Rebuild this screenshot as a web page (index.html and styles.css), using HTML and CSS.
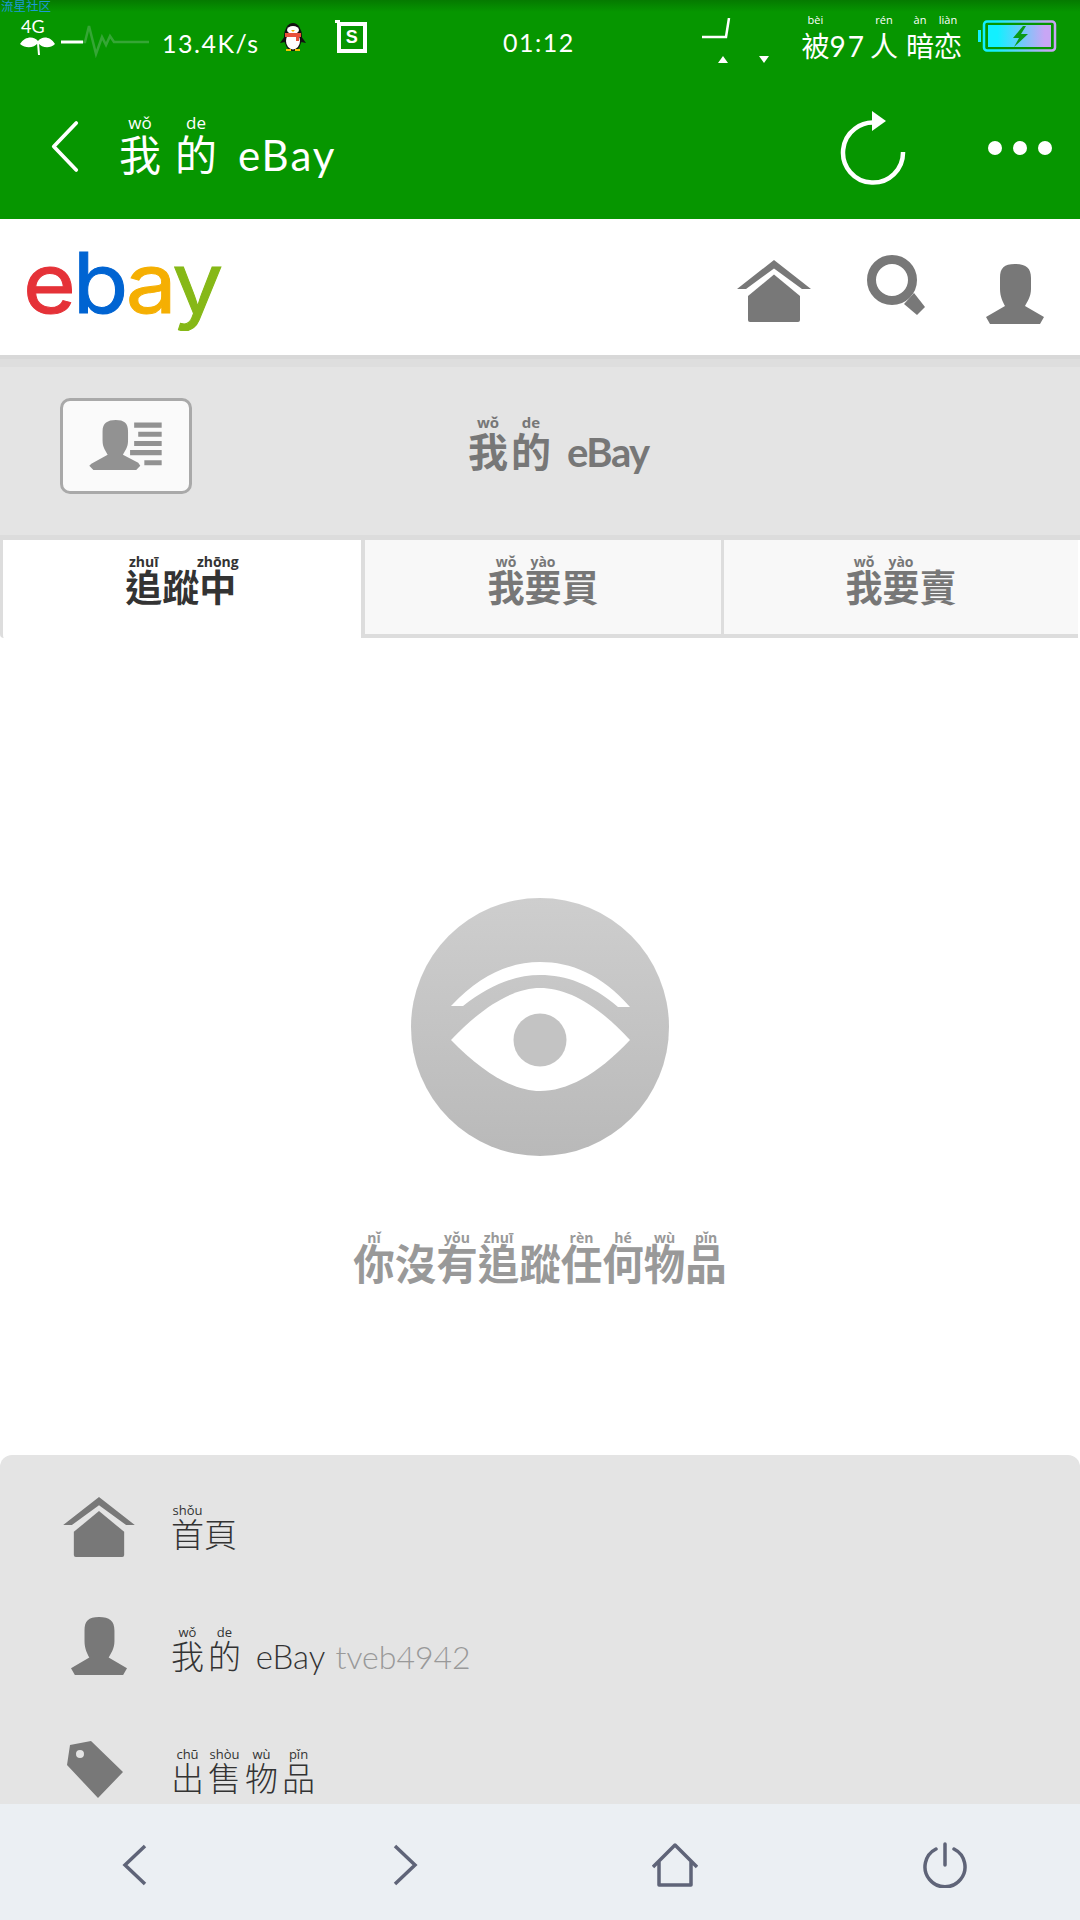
FILE: index.html
```html
<!DOCTYPE html>
<html lang="zh-Hant">
<head>
<meta charset="UTF-8" />
<meta name="viewport" content="width=device-width, initial-scale=1" />
<title>我的 eBay</title>
<link rel="stylesheet" href="styles.css">
</head>
<body>
  <!-- shared icon shapes -->
  <svg class="defs" width="0" height="0" aria-hidden="true">
    <symbol id="i-home" viewBox="0 0 74 62">
      <path d="M0 29 37 0 74 29H65L37 8.5 9 29Z"/>
      <path d="M11 36 37 14.5 63 36V60Q63 62 61 62H13Q11 62 11 60Z"/>
    </symbol>
    <symbol id="i-person" viewBox="0 0 58 60">
      <path d="M29 0C40 0 45 4 45 14V25C45 33 41 38 39 42L58 53 54 60H4L0 53 19 42C17 38 14 33 14 25V14C14 4 18 0 29 0Z"/>
    </symbol>
  </svg>

  <div class="watermark">流星社区</div>

  <div class="status-bar">
    <div class="status-left">
      <svg class="ic-net" width="36" height="46" viewBox="0 -8 36 46">
        <text x="1" y="15" class="net-text">4G</text>
        <path d="M18 23C14 18 5 18 0 26 6 31 14 30 18 25 22 30 30 31 35 26 30 18 22 18 18 23Z" fill="#fff"/>
        <path d="M18 25 19 37" stroke="#fff" stroke-width="2"/>
      </svg>
      <svg class="ic-pulse" width="88" height="34" viewBox="0 0 88 34">
        <path d="M22 18H0" stroke="#fff" stroke-width="3" fill="none"/>
        <path d="M22 18H24L28 2 35 30 41 13 45 21 49 12 53 18H88" stroke="#35a635" stroke-width="2.5" fill="none"/>
      </svg>
      <span class="speed">13.4K/s</span>
      <svg class="ic-qq" width="26" height="30" viewBox="0 0 26 30">
        <ellipse cx="13" cy="15" rx="9" ry="14" fill="#111"/>
        <path d="M5 14 0 21 5 20ZM21 14 26 21 21 20Z" fill="#111"/>
        <ellipse cx="13" cy="19" rx="7" ry="8.5" fill="#fff"/>
        <ellipse cx="13" cy="8" rx="6" ry="4" fill="#fff"/>
        <path d="M5 11H21V15H19V19H16V15H5Z" fill="#e8503a"/>
        <path d="M11 8H15L13 10Z" fill="#f3b300"/>
        <path d="M6 27H11V29H6ZM15 27H20V29H15Z" fill="#f3c300"/>
      </svg>
      <div class="s-box">S</div>
    </div>
    <div class="clock">01:12</div>
    <div class="status-right">
      <svg class="ic-signal" width="68" height="46" viewBox="0 0 68 46">
        <path d="M1 19H25L28 0" stroke="#fff" stroke-width="2.5" fill="none"/>
        <path d="M17 45 22 38 27 45ZM58 38H68L63 45Z" fill="#fff"/>
      </svg>
      <span class="liked">
        <ruby>被<rt>bèi</rt></ruby><span class="num">97</span><ruby class="wide">人<rt>rén</rt></ruby><ruby>暗<rt>àn</rt></ruby><ruby>恋<rt>liàn</rt></ruby>
      </span>
      <svg class="ic-batt" width="80" height="32" viewBox="0 0 80 32">
        <defs>
          <linearGradient id="batt" x1="0" y1="0" x2="1" y2="0">
            <stop offset="0.15" stop-color="#12f0ff"/>
            <stop offset="0.9" stop-color="#c8a6f5"/>
          </linearGradient>
        </defs>
        <path d="M3 10H0V22H3Z" fill="#12f0ff"/>
        <rect x="6" y="1.5" width="71" height="29" rx="3" fill="none" stroke="url(#batt)" stroke-width="2.5"/>
        <rect x="10" y="5" width="63" height="22" fill="url(#batt)"/>
        <path d="M45 6 35 18H41L36 27 50 14H43L48 6Z" fill="#0b9a18"/>
      </svg>
    </div>
  </div>

  <header class="app-bar">
    <svg class="ic-back" width="30" height="53" viewBox="0 0 32 56">
      <path d="M28 3 4 28 28 53" fill="none" stroke="#fff" stroke-width="4" stroke-linecap="round" stroke-linejoin="round"/>
    </svg>
    <h1 class="app-title"><ruby>我<rt>wǒ</rt></ruby><ruby>的<rt>de</rt></ruby><span class="latin">eBay</span></h1>
    <svg class="ic-refresh" width="68" height="74" viewBox="0 0 68 74">
      <path d="M40 12A30 30 0 1 0 65 41" fill="none" stroke="#fff" stroke-width="4.5"/>
      <path d="M32 0 46 10 32 20Z" fill="#fff" transform="translate(2 0)"/>
    </svg>
    <div class="dots"><span></span><span></span><span></span></div>
  </header>

  <nav class="site-nav">
    <div class="logo"><span class="l-e">e</span><span class="l-b">b</span><span class="l-a">a</span><span class="l-y">y</span></div>
    <div class="site-icons">
      <svg class="gray ic-nav-home"><use href="#i-home"/></svg>
      <svg class="gray ic-nav-search" viewBox="0 0 58 60">
        <circle cx="25" cy="25" r="20.5" fill="none" stroke="#787878" stroke-width="9"/>
        <path d="M37 49 47 38 58 52 50 60Z"/>
      </svg>
      <svg class="gray ic-nav-person"><use href="#i-person"/></svg>
    </div>
  </nav>

  <section class="page-head">
    <button class="card-btn" type="button" aria-label="Profile">
      <svg width="74" height="53" viewBox="0 0 72 52">
        <path d="M26 0C34 0 38 3 38 11V20C38 27 35 30 33 34L48 42 50 45 46 49H4L0 45 2 43 18 34C16 30 13 27 13 20V11C13 3 18 0 26 0Z" fill="#929292"/>
        <path d="M44 5H71M48 14H71M44 23H71M40 32H71M54 42H71" stroke="#929292" stroke-width="5"/>
      </svg>
    </button>
    <h2 class="page-title"><ruby>我<rt>wǒ</rt></ruby><ruby>的<rt>de</rt></ruby><span class="latin">eBay</span></h2>
  </section>

  <div class="tabs">
    <div class="tab active"><ruby>追<rt>zhuī</rt></ruby>蹤<ruby>中<rt>zhōng</rt></ruby></div>
    <div class="tab"><ruby>我<rt>wǒ</rt></ruby><ruby>要<rt>yào</rt></ruby>買</div>
    <div class="tab"><ruby>我<rt>wǒ</rt></ruby><ruby>要<rt>yào</rt></ruby>賣</div>
  </div>

  <main class="empty">
    <svg class="ic-eye" width="258" height="258" viewBox="0 0 258 258">
      <defs>
        <linearGradient id="eye-bg" x1="0" y1="0" x2="0" y2="1">
          <stop offset="0" stop-color="#cecece"/>
          <stop offset="1" stop-color="#b9b9b9"/>
        </linearGradient>
      </defs>
      <circle cx="129" cy="129" r="129" fill="url(#eye-bg)"/>
      <path d="M40 142C75 105 105 90 129 90 155 90 185 105 219 142 185 178 155 193 129 193 105 193 75 178 40 142Z" fill="#fff"/>
      <circle cx="129" cy="142" r="26.5" fill="#c3c3c3"/>
      <path d="M40 108C70 76 100 64 129 64 160 64 190 76 219 109H207C180 86 155 77 129 77 105 77 80 86 52 108Z" fill="#fff"/>
    </svg>
    <p class="empty-text"><ruby>你<rt>nǐ</rt></ruby>沒<ruby>有<rt>yǒu</rt></ruby><ruby>追<rt>zhuī</rt></ruby>蹤<ruby>任<rt>rèn</rt></ruby><ruby>何<rt>hé</rt></ruby><ruby>物<rt>wù</rt></ruby><ruby>品<rt>pǐn</rt></ruby></p>
  </main>

  <div class="menu">
    <div class="menu-row">
      <span class="menu-icon"><svg class="gray m-home"><use href="#i-home"/></svg></span>
      <span class="menu-text"><ruby>首<rt>shǒu</rt></ruby>頁</span>
    </div>
    <div class="menu-row">
      <span class="menu-icon"><svg class="gray m-person"><use href="#i-person"/></svg></span>
      <span class="menu-text"><ruby>我<rt>wǒ</rt></ruby><ruby>的<rt>de</rt></ruby><span class="latin">eBay</span> <span class="user-id">tveb4942</span></span>
    </div>
    <div class="menu-row">
      <span class="menu-icon">
        <svg class="gray m-tag" viewBox="0 0 56 57">
          <path fill-rule="evenodd" d="M3 4 24 0 56 31 31 57 0 24ZM13 9A4 4 0 1 0 13 17 4 4 0 1 0 13 9Z"/>
        </svg>
      </span>
      <span class="menu-text"><ruby>出<rt>chū</rt></ruby><ruby>售<rt>shòu</rt></ruby><ruby>物<rt>wù</rt></ruby><ruby>品<rt>pǐn</rt></ruby></span>
    </div>
  </div>

  <footer class="browser-bar">
    <svg width="26" height="42" viewBox="0 0 26 42"><path d="M23 2 3 21 23 40"/></svg>
    <svg width="26" height="42" viewBox="0 0 26 42"><path d="M3 2 23 21 3 40"/></svg>
    <svg width="46" height="44" viewBox="0 0 46 44"><path d="M1 24 23 2 45 24M7 18V42H39V18" stroke-linejoin="round"/></svg>
    <svg width="46" height="46" viewBox="0 0 46 46"><path d="M14 7A20 20 0 1 0 32 7M23 2V23" stroke-linecap="round"/></svg>
  </footer>
</body>
</html>
```

FILE: styles.css
```css
/* Reset */
* {
  box-sizing: border-box;
}

html, body {
  margin: 0;
  padding: 0;
}

body {
  position: relative;
  width: 1080px;
  height: 1920px;
  overflow: hidden;
  display: flex;
  flex-direction: column;
  background: #fff;
  font-family: "Lato", "Noto Sans CJK TC", sans-serif;
  color: #333;
}

.defs {
  position: absolute;
}

h1, h2, p {
  margin: 0;
  font-weight: normal;
}

/* pinyin sits right on top of the glyphs, so it gets nudged per section */
rt {
  position: relative;
  font-family: "Open Sans", sans-serif;
}

.gray {
  fill: #787878;
  display: block;
}

.latin {
  margin-left: 0.5em;
}

.watermark {
  position: absolute;
  top: 0;
  left: 1px;
  font-size: 12.5px;
  line-height: 14px;
  color: #1c9ad6;
}

/* Status bar */
.status-bar {
  height: 72px;
  padding: 18px 22px 0 20px;
  display: grid;
  grid-template-columns: 1fr auto 1fr;
  background: linear-gradient(#057a00, #069600 12px);
  color: #fff;
}

.status-left,
.status-right {
  display: flex;
  align-items: flex-start;
}

.status-right {
  justify-content: flex-end;
}

.ic-net {
  margin-top: -8px;
}

.net-text {
  font-size: 18px;
  fill: #fff;
  font-family: "Lato", sans-serif;
}

.ic-pulse {
  margin: 6px 0 0 5px;
}

.speed {
  margin: 10px 0 0 13px;
  font-size: 25px;
  line-height: 30px;
  letter-spacing: 1.5px;
}

.ic-qq {
  margin: 4px 0 0 20px;
}

.s-box {
  position: relative;
  width: 30px;
  height: 31px;
  margin: 4px 0 0 31px;
  border: 4px solid #fff;
  font: bold 18px/23px "Liberation Sans", sans-serif;
  text-align: center;
}

.s-box::before {
  content: "";
  position: absolute;
  top: -6px;
  left: -6px;
  width: 5px;
  height: 3px;
  background: #fff;
}

.clock {
  margin-top: 9px;
  font-size: 25px;
  line-height: 30px;
  letter-spacing: 1.5px;
}

.ic-signal {
  margin: 0 32px 0 0;
}

.liked {
  margin-top: 2px;
  font-size: 28px;
  line-height: 34px;
  white-space: nowrap;
}

.liked rt {
  top: -5px;
  font-size: 11px;
}

.liked .num {
  letter-spacing: 2px;
}

.liked .wide {
  margin: 0 8px 0 4px;
}

.ic-batt {
  margin: 2px 0 0 16px;
}

/* App bar */
.app-bar {
  height: 147px;
  padding: 0 28px 0 50px;
  display: flex;
  align-items: center;
  background: #069600;
  color: #fff;
}

.ic-back {
  margin: 2px 39px 0 0;
}

.app-title {
  flex: 1;
  margin-top: 5px;
  font-size: 42px;
  line-height: 50px;
  font-weight: 400;
}

.app-title rt {
  top: -1px;
  font-size: 17px;
}

.app-title ruby + ruby {
  margin-left: 14px;
}

.app-title .latin {
  letter-spacing: 2px;
}

.ic-refresh {
  margin: 4px 82px 0 0;
}

.dots {
  display: flex;
  gap: 11px;
  margin-top: 4px;
}

.dots span {
  width: 14px;
  height: 14px;
  border-radius: 50%;
  background: #fff;
}

/* Site nav */
.site-nav {
  height: 140px;
  padding: 0 35px 0 23px;
  display: flex;
  align-items: center;
  justify-content: space-between;
  border-bottom: 4px solid #d8d8d8;
}

.logo {
  font-family: "Inter", sans-serif;
  font-size: 84px;
  line-height: 92px;
  letter-spacing: -3px;
  margin-bottom: 9px;
  transform: scaleX(1.08);
  transform-origin: left center;
  -webkit-text-stroke: 1px currentColor;
}

.l-e { color: #e53238; }
.l-b { color: #0064d2; }
.l-a { color: #f5af02; }
.l-y { color: #86b817; }

.site-icons {
  display: flex;
  align-items: flex-start;
  margin-top: 5px;
}

.ic-nav-home {
  width: 74px;
  height: 62px;
  margin-top: 5px;
}

.ic-nav-search {
  width: 58px;
  height: 60px;
  margin-left: 56px;
}

.ic-nav-person {
  width: 60px;
  height: 60px;
  margin: 9px 0 0 60px;
}

/* Page head */
.page-head {
  height: 181px;
  padding-left: 60px;
  display: flex;
  align-items: center;
  background: linear-gradient(#dedede 8px, #e4e4e4 8px);
  border-bottom: 5px solid #dcdcdc;
}

.card-btn {
  width: 132px;
  height: 96px;
  margin-bottom: 2px;
  padding: 0;
  display: flex;
  align-items: center;
  justify-content: center;
  background: #fafafa;
  border: 3px solid #a9a9a9;
  border-radius: 10px;
}

.page-title {
  margin: 0 0 3px 276px;
  font-size: 40px;
  line-height: 48px;
  font-weight: bold;
  color: #777;
}

.page-title rt {
  top: 1px;
  font-size: 15px;
  font-weight: bold;
}

.page-title ruby + ruby {
  margin-left: 3px;
}

.page-title .latin {
  margin-left: 0.4em;
  letter-spacing: -1.5px;
}

/* Tabs */
.tabs {
  height: 98px;
  display: grid;
  grid-template-columns: 365px 359px 356px;
}

.tab {
  padding-top: 26px;
  text-align: center;
  background: #f8f8f8;
  border-right: 3px solid #ddd;
  border-bottom: 4px solid #ddd;
  font-size: 37px;
  line-height: 44px;
  font-weight: bold;
  color: #777;
}

.tab:last-child {
  margin-right: 2px;
  border-right: 0;
}

.tab rt {
  top: 2px;
  font-size: 14px;
  font-weight: bold;
}

.tab.active {
  background: #fff;
  color: #333;
  border-left: 3px solid #ddd;
  border-right-width: 4px;
  border-bottom: 0;
  border-bottom-left-radius: 4px;
}

/* Empty state */
.empty {
  flex: 1;
  padding-top: 260px;
  display: flex;
  flex-direction: column;
  align-items: center;
}

.empty-text {
  margin-top: 72px;
  white-space: nowrap;
  font-size: 41.5px;
  line-height: 42px;
  font-weight: bold;
  color: #999;
}

.empty-text rt {
  top: 4px;
  font-size: 14px;
  font-weight: bold;
}

/* Side menu */
.menu {
  height: 349px;
  flex-shrink: 0;
  overflow: hidden;
  padding-top: 38px;
  background: #e4e4e4;
  border-radius: 12px 12px 0 0;
}

.menu-row {
  height: 122px;
  display: flex;
  align-items: flex-start;
}

.menu-icon {
  width: 100px;
  margin: 0 22px 0 49px;
  display: flex;
  justify-content: center;
}

.m-home {
  width: 72px;
  height: 60px;
  margin-top: 4px;
}

.m-person {
  width: 56px;
  height: 58px;
  margin-top: 2px;
}

.m-tag {
  width: 56px;
  height: 57px;
  margin: 4px 8px 0 0;
}

.menu-text {
  margin-top: 10px;
  font-size: 33px;
  line-height: 44px;
  font-weight: 300;
  color: #333;
  white-space: nowrap;
}

.menu-text rt {
  top: 1px;
  font-size: 13px;
  font-weight: 400;
}

.menu-text ruby + ruby {
  margin-left: 4px;
}

.menu-text .latin {
  margin-left: 0.45em;
}

.user-id {
  font-size: 32px;
  margin-left: 2px;
  color: #999;
}

/* Browser bar */
.browser-bar {
  height: 116px;
  flex-shrink: 0;
  padding-top: 5px;
  display: grid;
  grid-template-columns: repeat(4, 1fr);
  align-items: center;
  justify-items: center;
  background: #ebeff3;
}

.browser-bar svg {
  fill: none;
  stroke: #5f6478;
  stroke-width: 3.5;
}
```
